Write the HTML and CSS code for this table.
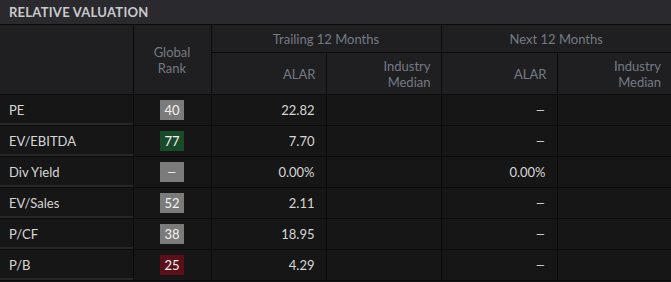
FILE: index.html
```html
<!DOCTYPE html>
<html>
<head>
<meta charset="utf-8">
<link rel="stylesheet" href="styles.css">
</head>
<body>
<div class="panel">
  <div class="title">RELATIVE VALUATION</div>
  <table class="val">
    <colgroup>
      <col class="c-label"><col class="c-rank"><col class="c-a"><col class="c-b"><col class="c-c"><col class="c-d">
    </colgroup>
    <thead>
      <tr class="h1">
        <th rowspan="2"></th>
        <th rowspan="2" class="center">Global<br>Rank</th>
        <th colspan="2" class="center">Trailing 12 Months</th>
        <th colspan="2" class="center">Next 12 Months</th>
      </tr>
      <tr class="h2">
        <th>ALAR</th>
        <th>Industry<br>Median</th>
        <th>ALAR</th>
        <th>Industry<br>Median</th>
      </tr>
    </thead>
    <tbody>
      <tr><td class="label">PE</td><td class="rank"><span class="badge grey">40</span></td><td class="num">22.82</td><td></td><td class="num"><span class="dash">–</span></td><td></td></tr>
      <tr><td class="label">EV/EBITDA</td><td class="rank"><span class="badge green">77</span></td><td class="num">7.70</td><td></td><td class="num"><span class="dash">–</span></td><td></td></tr>
      <tr><td class="label">Div Yield</td><td class="rank"><span class="badge grey"><span class="dash mid">–</span></span></td><td class="num">0.00%</td><td></td><td class="num">0.00%</td><td></td></tr>
      <tr><td class="label">EV/Sales</td><td class="rank"><span class="badge grey">52</span></td><td class="num">2.11</td><td></td><td class="num"><span class="dash">–</span></td><td></td></tr>
      <tr><td class="label">P/CF</td><td class="rank"><span class="badge grey">38</span></td><td class="num">18.95</td><td></td><td class="num"><span class="dash">–</span></td><td></td></tr>
      <tr><td class="label">P/B</td><td class="rank"><span class="badge red">25</span></td><td class="num">4.29</td><td></td><td class="num"><span class="dash">–</span></td><td></td></tr>
    </tbody>
  </table>
</div>
</body>
</html>
```
FILE: styles.css
```css
html, body {
  margin: 0;
  padding: 0;
  background: #161616;
}
body {
  font-family: Lato, "Open Sans", sans-serif;
  font-size: 13px;
  color: #d6d6d6;
}
.panel {
  width: 671px;
}
.title {
  height: 24px;
  line-height: 24px;
  background: #2a2a2e;
  color: #c9c9cc;
  font-weight: bold;
  font-size: 13px;
  letter-spacing: 0.25px;
  padding-left: 9px;
  border-bottom: 1px solid #0b0b0b;
}
.val {
  width: 671px;
  border-collapse: collapse;
  table-layout: fixed;
}
.c-label { width: 133px; }
.c-rank { width: 78px; }
.c-a { width: 115px; }
.c-b { width: 115px; }
.c-c { width: 116px; }
.c-d { width: 114px; }
.val th {
  background: #1f1f21;
  color: #757a84;
  font-weight: normal;
  text-align: right;
  padding: 0 10px;
  border: 1px solid #0b0b0b;
  line-height: 16px;
}
.val th:first-child, .val td:first-child { border-left: none; }
.val th:last-child, .val td:last-child { border-right: none; }
.val tr.h1 th { border-top: none; }
.val th.center { text-align: center; padding: 0; }
.val tr.h1 th { height: 27px; }
.val tr.h2 th { height: 41px; }
.val td {
  height: 30px;
  padding: 0 11px;
  border: 1px solid #0b0b0b;
  background: #161616;
}
.val td.label {
  padding-left: 9px;
  box-shadow: inset 0 -2px 0 #272727;
}
.val td.num { text-align: right; }
.val td.rank { text-align: center; padding: 0; }
.dash {
  display: inline-block;
  transform: scaleX(1.4);
  transform-origin: right center;
}
.dash.mid { transform-origin: center; }
.badge {
  display: inline-block;
  width: 24px;
  height: 20px;
  line-height: 20px;
  text-align: center;
  color: #f2f2f2;
  vertical-align: middle;
}
.badge.grey { background: #7b7b7b; }
.badge.green { background: #194a2a; }
.badge.red { background: #5b1019; }
```
